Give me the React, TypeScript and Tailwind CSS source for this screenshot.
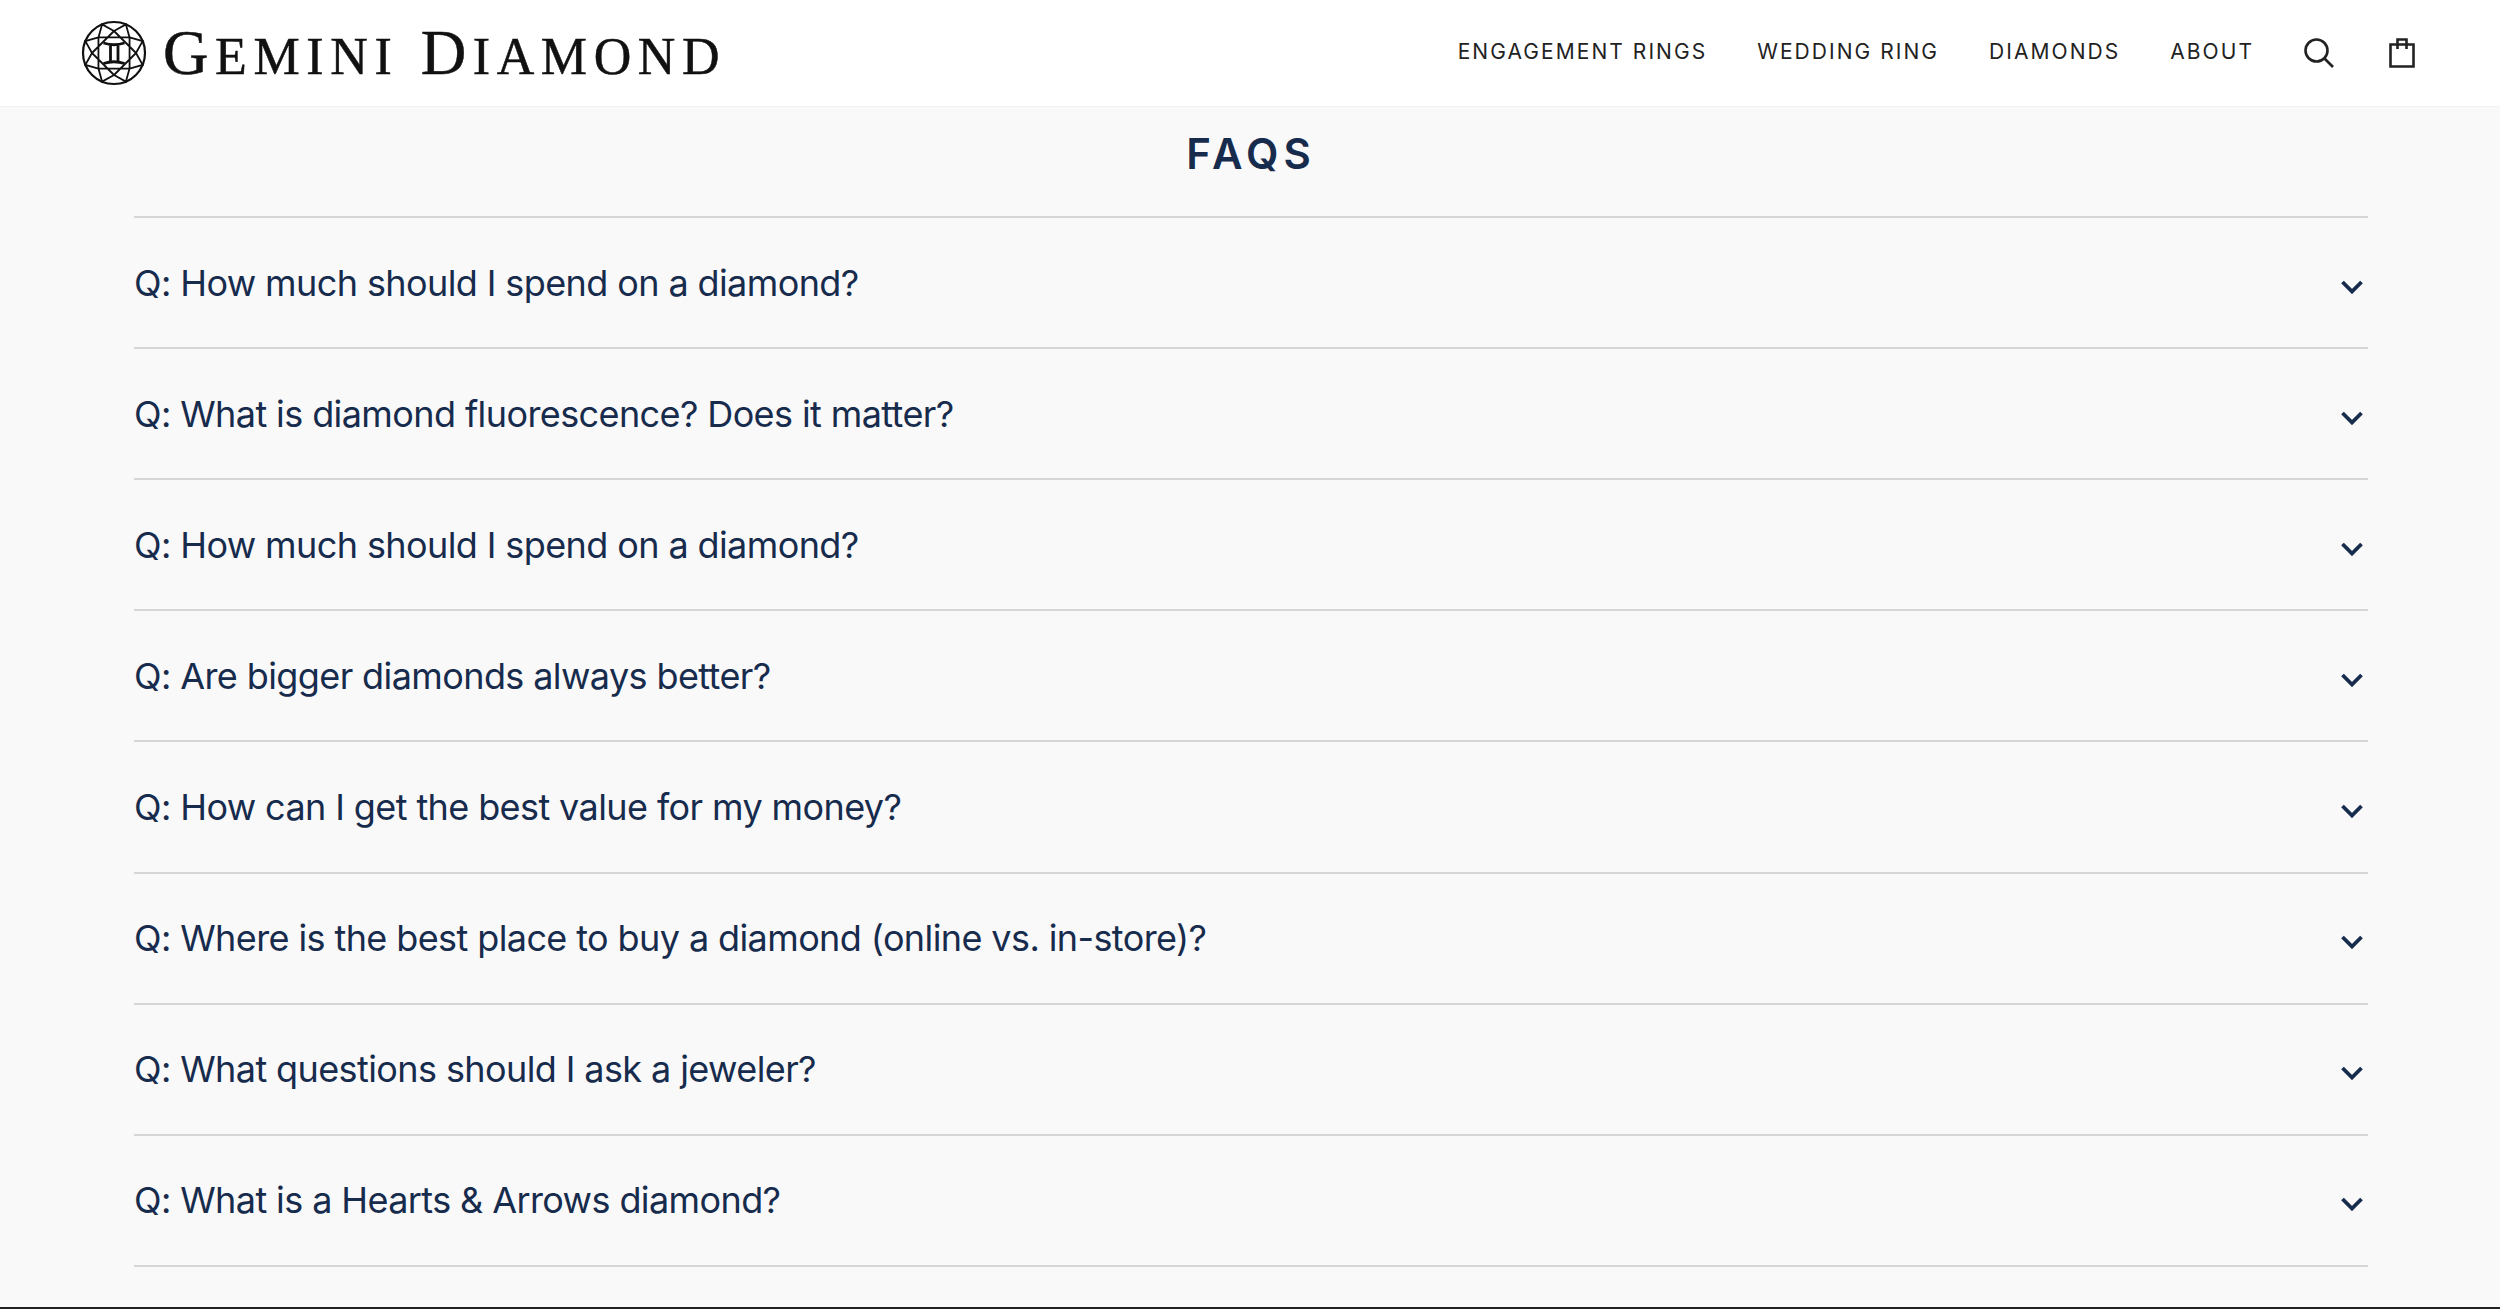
const FAQS = [
  "Q: How much should I spend on a diamond?",
  "Q: What is diamond fluorescence? Does it matter?",
  "Q: How much should I spend on a diamond?",
  "Q: Are bigger diamonds always better?",
  "Q: How can I get the best value for my money?",
  "Q: Where is the best place to buy a diamond (online vs. in-store)?",
  "Q: What questions should I ask a jeweler?",
  "Q: What is a Hearts & Arrows diamond?",
];

const NAV = ["ENGAGEMENT RINGS", "WEDDING RING", "DIAMONDS", "ABOUT"];

function polar(r: number, deg: number) {
  const a = (deg * Math.PI) / 180;
  return `${(33 + r * Math.cos(a)).toFixed(2)} ${(33 + r * Math.sin(a)).toFixed(2)}`;
}

function LogoMark() {
  const lines: string[] = [];
  for (let i = 0; i < 8; i++) {
    const deg = i * 45 - 90;
    // two overlapping squares for the table, then the kites out to the girdle
    lines.push(`M${polar(22, deg)}L${polar(22, deg + 90)}`);
    lines.push(`M${polar(22, deg)}L${polar(31, deg + 22.5)}L${polar(22, deg + 45)}`);
  }
  return (
    <svg width="66" height="66" viewBox="0 0 66 66" fill="none" stroke="#111" strokeWidth="1.8">
      <circle cx="33" cy="33" r="31" strokeWidth="2.2" />
      <path d={lines.join("")} />
      <path d="M22.5 23q10.5 3.5 21 0M22.5 43.5q10.5-3.5 21 0M29.5 25.5v15.5M37 25.5v15.5" strokeWidth="2.8" />
    </svg>
  );
}

function Logo() {
  return (
    <div className="flex items-center gap-[16px]">
      <LogoMark />
      <div className="whitespace-nowrap font-['Liberation_Serif',serif] text-[63px] leading-none tracking-[6.6px] text-[#111] [-webkit-text-stroke:0.5px_#111]">
        G<span className="text-[52px]">EMINI</span> D<span className="text-[52px]">IAMOND</span>
      </div>
    </div>
  );
}

function SearchIcon() {
  return (
    <svg width="30" height="30" viewBox="0 0 30 30" fill="none" stroke="#222" strokeWidth="2.6">
      <circle cx="12.5" cy="12.5" r="11" />
      <path d="M20.5 20.5l8.5 8.5" />
    </svg>
  );
}

function BagIcon() {
  return (
    <svg width="26" height="30" viewBox="0 0 26 30" fill="none" stroke="#222" strokeWidth="2.6">
      <path d="M1.5 6.5h23v22h-23zM8.5 11V1.5h9V11" />
    </svg>
  );
}

function Chevron() {
  return (
    <svg width="22" height="14" viewBox="0 0 22 14" fill="none" stroke="#172b4d" strokeWidth="3.8">
      <path d="M1.5 2l9.5 9.5L20.5 2" />
    </svg>
  );
}

export default function App() {
  return (
    <div className="flex h-[1309px] flex-col overflow-hidden bg-[#f9f9f9] font-['Inter',sans-serif] text-[#172b4d]">
      <header className="flex h-[107px] shrink-0 items-center justify-between border-b border-[#f5f1ed] bg-white pl-[81px] pr-[85px]">
        <Logo />
        <nav className="flex items-center">
          <div className="mb-[3px] flex items-center gap-[50px] text-[21px] tracking-[2.05px] text-[#222]">
            {NAV.map((item) => (
              <a key={item} className="whitespace-nowrap">
                {item}
              </a>
            ))}
          </div>
          <div className="ml-[50px] flex items-center gap-[55px]">
            <SearchIcon />
            <BagIcon />
          </div>
        </nav>
      </header>

      <main className="flex-1 pl-[134px] pr-[132px]">
        <h1 className="flex h-[109px] items-center justify-center pb-[17px] text-[42px] font-semibold tracking-[5px]">
          FAQS
        </h1>
        <div className="border-t-2 border-[#d6d6d6]">
          {FAQS.map((question, index) => (
            <div
              key={index}
              className="flex h-[131.12px] items-center justify-between border-b-2 border-[#d6d6d6] pr-[5px]"
            >
              <span className="text-[36px] leading-none tracking-[-0.6px]">{question}</span>
              <span className="mt-[8px] flex">
                <Chevron />
              </span>
            </div>
          ))}
        </div>
      </main>

      <div className="h-[2px] shrink-0 bg-[#222]" />
    </div>
  );
}
